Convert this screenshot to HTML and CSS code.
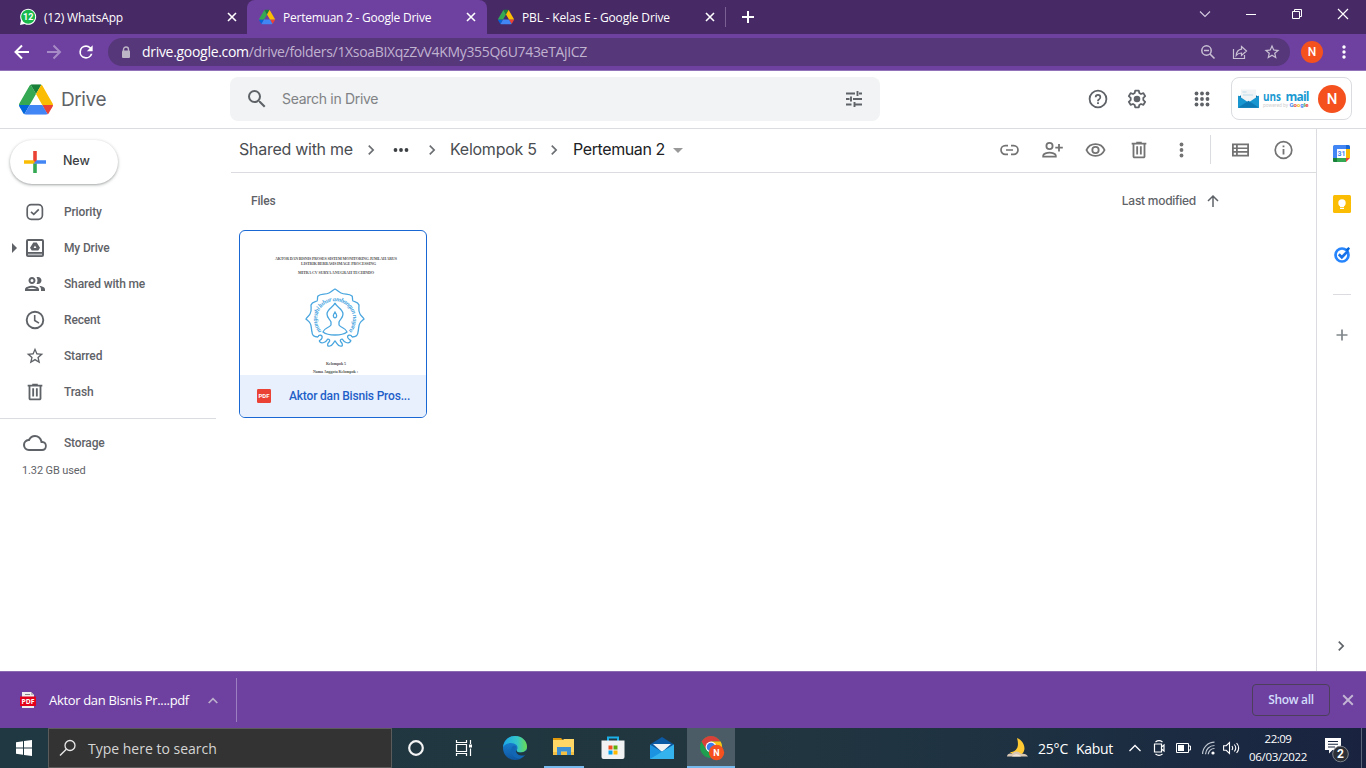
FILE: index.html
```html
<!DOCTYPE html>
<html lang="en">
<head>
<meta charset="utf-8">
<title>Pertemuan 2 - Google Drive</title>
<link rel="stylesheet" href="styles.css">
</head>
<body>
<svg class="defs" width="0" height="0">
  <symbol id="drive" viewBox="0 0 87.3 78">
    <path d="m6.6 66.85 3.85 6.65c.8 1.4 1.95 2.5 3.3 3.3l13.75-23.8h-27.5c0 1.55.4 3.1 1.2 4.5z" fill="#0066da"/>
    <path d="m43.65 25-13.75-23.8c-1.35.8-2.5 1.9-3.3 3.3l-25.4 44a9.06 9.06 0 0 0-1.2 4.5h27.5z" fill="#34a853"/>
    <path d="m73.55 76.8c1.35-.8 2.5-1.9 3.3-3.3l1.6-2.75 7.65-13.25c.8-1.4 1.2-2.95 1.2-4.5h-27.5l5.85 11.5z" fill="#ea4335"/>
    <path d="m43.65 25 13.75-23.8c-1.35-.8-2.9-1.2-4.5-1.2h-18.5c-1.6 0-3.15.45-4.5 1.2z" fill="#188038"/>
    <path d="m59.8 53h-32.3l-13.75 23.8c1.35.8 2.9 1.2 4.5 1.2h50.8c1.6 0 3.15-.45 4.5-1.2z" fill="#4285f4"/>
    <path d="m73.4 26.5-12.7-22c-.8-1.4-1.95-2.5-3.3-3.3l-13.75 23.8 16.15 28h27.45c0-1.55-.4-3.1-1.2-4.5z" fill="#fbbc04"/>
  </symbol>
  <symbol id="x" viewBox="0 0 10 10"><path d="M1 1l8 8M9 1l-8 8" fill="none" stroke="currentColor" stroke-width="1.6"/></symbol>
  <symbol id="trash" viewBox="0 0 24 24"><path d="M15 4V3H9v1H4v2h1v13c0 1.100.9 2 2 2h10c1.100 0 2-.9 2-2V6h1V4h-5zm2 15H7V6h10v13zM9 8h2v9H9zm4 0h2v9h-2z"/></symbol>
  <symbol id="star" viewBox="0 0 24 24"><path d="M22 9.240l-7.190-.62L12 2 9.190 8.630 2 9.240l5.460 4.730L5.820 21 12 17.270 18.180 21l-1.630-7.030L22 9.240zM12 15.400l-3.760 2.270 1-4.280-3.320-2.880 4.380-.38L12 6.100l1.710 4.040 4.380.38-3.320 2.880 1 4.280L12 15.400z"/></symbol>
  <symbol id="chev" viewBox="0 0 24 24"><path d="M8.600 16.600L13.200 12 8.600 7.400 10 6l6 6-6 6z"/></symbol>
</svg>

<header class="tabs">
  <div class="tab first">
    <svg class="fav" width="18" height="18" viewBox="0 0 18 18"><path d="M1 17l1-4.600A8 8 0 1 1 5.600 16z" fill="#fff"/><circle cx="9.200" cy="8.800" r="7" fill="#19b84b"/><text x="9.200" y="11.900" text-anchor="middle" class="badge12">12</text></svg>
    <span class="t ui tab-a">(12) WhatsApp</span>
    <svg class="close" width="10" height="10"><use href="#x"/></svg>
  </div>
  <div class="tab active">
    <svg class="fav" width="16" height="16"><use href="#drive"/></svg>
    <span class="t ui tab-b">Pertemuan 2 - Google Drive</span>
    <svg class="close" width="10" height="10"><use href="#x"/></svg>
  </div>
  <div class="tab third">
    <svg class="fav" width="16" height="16"><use href="#drive"/></svg>
    <span class="t ui tab-c">PBL - Kelas E - Google Drive</span>
    <svg class="close" width="10" height="10"><use href="#x"/></svg>
  </div>
  <i class="tabsep"></i>
  <svg class="newtab" width="12" height="12" viewBox="0 0 12 12"><path d="M6 0v12M0 6h12" stroke="#fff" stroke-width="2"/></svg>
  <div class="winctl">
    <svg width="46" height="28" viewBox="0 0 46 28"><path d="M18 11.500l5 5 5-5" fill="none" stroke="#d5cbe0" stroke-width="1.100"/></svg>
    <svg width="46" height="28" viewBox="0 0 46 28"><path d="M18 14.500h10" stroke="#fff"/></svg>
    <svg width="46" height="28" viewBox="0 0 46 28"><path d="M18.500 11.500h7v7h-7zM20.500 11V9.500h7v7H26" fill="none" stroke="#fff"/></svg>
    <svg width="46" height="28" viewBox="0 0 46 28"><path d="M18 9l10 10M28 9L18 19" stroke="#fff" stroke-width="1.200"/></svg>
  </div>
</header>

<div class="toolbar">
  <svg width="32" height="24" viewBox="0 0 32 24"><path d="M29 12H16M22 5.500L15.500 12l6.500 6.500" fill="none" stroke="#fff" stroke-width="2"/></svg>
  <svg class="fwd" width="32" height="24" viewBox="0 0 32 24"><path d="M15 12h13M21.500 5.500L28 12l-6.500 6.500" fill="none" stroke="#a78bc6" stroke-width="2"/></svg>
  <svg class="reload" width="20" height="20" viewBox="0 0 24 24"><path fill="#fff" d="M17.650 6.350A7.960 7.960 0 0 0 12 4a8 8 0 1 0 7.730 10h-2.080A6 6 0 1 1 12 6c1.660 0 3.140.69 4.220 1.780L13 11h7V4z"/></svg>
  <div class="omni">
    <svg class="lock" width="10" height="13" viewBox="0 0 10 13"><path d="M2.500 5V3.500a2.500 2.500 0 0 1 5 0V5" fill="none" stroke="#bdb6c6" stroke-width="1.400"/><rect x="1" y="4.500" width="8" height="7.500" rx="1" fill="#bdb6c6"/></svg>
    <span class="t ui url"><b>drive.google.com</b>/drive/folders/1XsoaBIXqzZvV4KMy355Q6U743eTAjICZ</span>
    <svg width="32" height="20" viewBox="0 0 32 20"><circle cx="14.500" cy="8.500" r="4.700" fill="none" stroke="#c9c0d4" stroke-width="1.500"/><path d="M12 8.500h5M18 12l4.500 4.500" stroke="#c9c0d4" stroke-width="1.600"/></svg>
    <svg width="32" height="20" viewBox="0 0 32 20"><path d="M9.500 7v9.500h11V13" fill="none" stroke="#c9c0d4" stroke-width="1.200"/><path d="M17.500 4.500l5 4.500-5 4.500V11c-2.500 0-4 .8-5.300 2.500.3-3.300 2-5.900 5.300-6.300z" fill="none" stroke="#c9c0d4" stroke-width="1.200"/></svg>
    <svg class="ostar" width="18" height="18"><use href="#star"/></svg>
  </div>
  <span class="ava small">N</span>
  <svg class="kebab" width="4" height="14" viewBox="0 0 4 14"><g fill="#fff"><circle cx="2" cy="2" r="1.700"/><circle cx="2" cy="7" r="1.700"/><circle cx="2" cy="12" r="1.700"/></g></svg>
</div>

<div class="gbar">
  <svg class="logo" width="34" height="31" viewBox="0 0 87.300 78"><use href="#drive"/></svg>
  <span class="t g drive-name">Drive</span>
  <div class="search">
    <svg width="24" height="24" viewBox="0 0 24 24"><path d="M15.500 14h-.79l-.28-.27A6.470 6.470 0 0 0 16 9.500 6.500 6.500 0 1 0 9.500 16c1.610 0 3.090-.59 4.230-1.570l.27.28v.79l5 4.990L20.490 19zm-6 0C7.010 14 5 11.990 5 9.500S7.010 5 9.500 5 14 7.010 14 9.500 11.990 14 9.500 14z"/></svg>
    <span class="t g ph">Search in Drive</span>
    <svg class="tune" width="20" height="20" viewBox="0 0 20 20"><path d="M2 4.500h9M15 4.500h3M2 10h3.500M9 10h9M2 15.500h5.500M11 15.500h7M13.500 2v5M7 7.500v5M10.500 13v5" fill="none" stroke="#5f6368" stroke-width="1.900"/></svg>
  </div>
  <div class="gright">
    <svg class="help" width="24" height="24" viewBox="0 0 24 24"><circle cx="12" cy="12" r="8.400" fill="none" stroke="#5f6368" stroke-width="1.800"/><path d="M11.100 15.300h1.800v1.700h-1.800zM12 7a3.200 3.200 0 0 0-3.200 3.200h1.700a1.500 1.500 0 1 1 3 0c0 1.600-2.400 1.500-2.400 4.100h1.800c0-1.800 2.300-2 2.300-4.100A3.200 3.200 0 0 0 12 7z"/></svg>
    <svg class="gear" width="24" height="24" viewBox="0 0 24 24"><path d="M10.200 3.600h3.600l.5 2.400 1.700 1 2.400-.9 1.800 3.100-1.900 1.700v2.200l1.900 1.700-1.800 3.100-2.400-.9-1.700 1-.5 2.400h-3.600l-.5-2.400-1.700-1-2.400.9-1.800-3.100 1.900-1.700v-2.200L3.800 9.200l1.800-3.100 2.400.9 1.700-1z" fill="none" stroke="#5f6368" stroke-width="1.800" stroke-linejoin="round"/><circle cx="12" cy="12" r="3.300"/></svg>
    <svg class="apps" width="16" height="16" viewBox="0 0 16 16"><g><circle cx="2.500" cy="2.500" r="1.900"/><circle cx="8" cy="2.500" r="1.900"/><circle cx="13.500" cy="2.500" r="1.900"/><circle cx="2.500" cy="8" r="1.900"/><circle cx="8" cy="8" r="1.900"/><circle cx="13.500" cy="8" r="1.900"/><circle cx="2.500" cy="13.500" r="1.900"/><circle cx="8" cy="13.500" r="1.900"/><circle cx="13.500" cy="13.500" r="1.900"/></g></svg>
    <div class="account">
      <svg width="74" height="24" viewBox="0 0 74 24">
        <path d="M0 10l10.500-6L21 10v10.500H0z" fill="#0a6fa8"/><path d="M3 2.500h15v12.500H3z" fill="#f1f3f5"/><path d="M4.500 5h4M5 8h10" stroke="#b4d6e6" stroke-width=".8"/><path d="M0 8.500l10.500 7 10.500-7v12.200H0z" fill="#1796cf"/><path d="M0 20.700l10.500-7 10.500 7z" fill="#0e7ab5"/>
        <text x="25" y="13.500" class="uns" textLength="18" lengthAdjust="spacingAndGlyphs">uns</text><text x="47.500" y="13.500" class="uns" textLength="24">mail</text><text x="25" y="20" class="pow" textLength="25">powered by</text>
        <text x="51.500" y="20" class="goog" textLength="19"><tspan fill="#4285f4">G</tspan><tspan fill="#ea4335">o</tspan><tspan fill="#fbbc04">o</tspan><tspan fill="#4285f4">g</tspan><tspan fill="#34a853">l</tspan><tspan fill="#ea4335">e</tspan></text>
      </svg>
      <span class="ava">N</span>
    </div>
  </div>
</div>

<main class="body">
  <nav class="side">
    <div class="new"><svg width="22" height="22" viewBox="0 0 22 22"><path d="M9.200 0h3.600v11H9.200z" fill="#ea4335"/><path d="M9.200 11h3.600v11H9.200z" fill="#34a853"/><path d="M0 9.200h9.200l3.600 3.600H0z" fill="#fbbc04"/><path d="M22 9.200h-9.200l-3.600 3.600H22z" fill="#4285f4"/></svg><span class="t g newt">New</span></div>
    <div class="item"><i class="arr"></i><svg width="24" height="24" viewBox="0 0 24 24"><rect x="4.200" y="4.700" width="15.200" height="14.600" rx="4" fill="none" stroke="#5f6368" stroke-width="1.700"/><path d="M8 11.800l2.800 2.600 5-5" fill="none" stroke="#5f6368" stroke-width="1.700"/></svg><span class="t">Priority</span></div>
    <div class="item"><i class="arr on"></i><svg width="24" height="24" viewBox="0 0 24 24"><path d="M19 3H5a2 2 0 0 0-2 2v14c0 1.100.9 2 2 2h14a2 2 0 0 0 2-2V5a2 2 0 0 0-2-2zM5 5h14v11H5z" fill-rule="evenodd"/><path d="M5 17.700h14v1.600H5z" fill="#b8babd"/><path d="M10.300 6.500h3.400l3.300 5.300-1.700 2.700H8.700L7 11.800zm1.700 3l-1.400 2.500h2.800z" fill-rule="evenodd"/></svg><span class="t">My Drive</span></div>
    <div class="item"><i class="arr"></i><svg width="24" height="24" viewBox="0 0 24 24"><path d="M9 12c1.930 0 3.500-1.570 3.500-3.500S10.930 5 9 5 5.500 6.570 5.500 8.500 7.070 12 9 12zm0-5a1.500 1.500 0 1 1 0 3 1.500 1.500 0 0 1 0-3zm0 6.750c-2.340 0-7 1.170-7 3.500V19h14v-1.750c0-2.330-4.660-3.500-7-3.500zM4.340 17c.84-.58 2.870-1.250 4.660-1.250s3.820.67 4.660 1.250zM16.040 13.810c1.160.84 1.960 1.960 1.960 3.440V19h4v-1.750c0-2.020-3.500-3.170-5.960-3.440zM15 12c1.930 0 3.500-1.570 3.500-3.500S16.930 5 15 5c-.54 0-1.040.13-1.500.35.63.89 1 1.980 1 3.150s-.37 2.260-1 3.150c.46.22.96.35 1.500.35z"/></svg><span class="t">Shared with me</span></div>
    <div class="item"><i class="arr"></i><svg width="24" height="24" viewBox="0 0 24 24"><circle cx="12" cy="12" r="8.300" fill="none" stroke="#5f6368" stroke-width="1.900"/><path d="M11.700 7v5.500l4.300 2.600" fill="none" stroke="#5f6368" stroke-width="1.600"/></svg><span class="t">Recent</span></div>
    <div class="item"><i class="arr"></i><svg width="20" height="20" class="s20"><use href="#star"/></svg><span class="t">Starred</span></div>
    <div class="item"><i class="arr"></i><svg width="22" height="22" class="s22"><use href="#trash"/></svg><span class="t">Trash</span></div>
    <hr class="line">
    <div class="item storage"><i class="arr"></i><svg width="24" height="24" viewBox="0 0 24 24"><path d="M19.350 10.040A7.490 7.490 0 0 0 12 4C9.110 4 6.600 5.640 5.350 8.040A5.990 5.990 0 0 0 0 14a6 6 0 0 0 6 6h13a5 5 0 0 0 .35-9.960zM19 18H6a4 4 0 0 1-.44-7.970l1.070-.11.5-.95A5.470 5.470 0 0 1 12 6c2.620 0 4.880 1.860 5.390 4.430l.3 1.500 1.530.11A2.980 2.980 0 0 1 22 15a3 3 0 0 1-3 3z"/></svg><span class="t">Storage</span></div>
    <div class="used"><span class="t usedt">1.32 GB used</span></div>
  </nav>

  <section class="content">
    <div class="crumbs">
      <span class="t g c1">Shared with me</span><svg class="cv v1" width="20" height="20"><use href="#chev"/></svg>
      <svg class="dots" width="16" height="4" viewBox="0 0 16 4"><g fill="#3c4043"><circle cx="2.500" cy="2" r="1.900"/><circle cx="8" cy="2" r="1.900"/><circle cx="13.500" cy="2" r="1.900"/></g></svg>
      <svg class="cv v2" width="20" height="20"><use href="#chev"/></svg><span class="t g c2">Kelompok 5</span><svg class="cv v3" width="20" height="20"><use href="#chev"/></svg><span class="t g c3">Pertemuan 2</span><i class="caret"></i>
      <div class="acts">
        <svg width="43" height="22" viewBox="0 0 43 22"><path d="M20 6.700h-2.700a4.300 4.300 0 0 0 0 8.600H20M23 6.700h2.700a4.300 4.300 0 0 1 0 8.600H23M18 11h7" fill="none" stroke="#737373" stroke-width="1.700"/></svg>
        <svg width="43" height="22" viewBox="0 0 43 22"><circle cx="18.500" cy="7" r="3.100" fill="none" stroke="#737373" stroke-width="1.800"/><path d="M12.200 17.700v-1.200c0-1.900 4-2.900 6.300-2.900s6.300 1 6.300 2.900v1.200zM28 5v7.500M24.300 8.700h7.500" fill="none" stroke="#737373" stroke-width="1.800"/></svg>
        <svg width="43" height="22" viewBox="0 0 43 22"><path d="M12.500 11c1.500-3.500 5-5.900 9-5.900s7.500 2.400 9 5.900c-1.500 3.500-5 5.900-9 5.900s-7.500-2.400-9-5.900z" fill="none" stroke="#737373" stroke-width="1.900"/><circle cx="21.500" cy="11" r="3.200" fill="none" stroke="#737373" stroke-width="1.800"/></svg>
        <svg class="tr" width="22" height="22"><use href="#trash"/></svg>
        <svg width="43" height="22" viewBox="0 0 43 22"><g><circle cx="21.500" cy="5.500" r="1.900"/><circle cx="21.500" cy="11" r="1.900"/><circle cx="21.500" cy="16.500" r="1.900"/></g></svg>
        <i class="vsep"></i>
        <svg width="43" height="22" viewBox="0 0 43 22"><path fill-rule="evenodd" d="M13 4.500h17v13H13zM14.800 6.300v2.100h2.200V6.300zm4 0v2.100h9.400V6.300zm-4 3.700v2h2.200v-2zm4 0v2h9.400v-2zm-4 3.700v2.100h2.200v-2.100zm4 0v2.100h9.400v-2.100z"/></svg>
        <svg width="43" height="22" viewBox="0 0 43 22"><circle cx="21.500" cy="11" r="8.300" fill="none" stroke="#737373" stroke-width="1.700"/><path d="M21.500 10v5.500M21.500 6.500v1.800" stroke="#737373" stroke-width="1.800"/></svg>
      </div>
    </div>
    <div class="listhead"><span class="t files">Files</span><span class="t g lm">Last modified</span><svg width="14" height="14" viewBox="0 0 14 14"><path d="M7 13V2M2 7l5-5 5 5" fill="none" stroke="#5f6368" stroke-width="1.500"/></svg></div>
    <article class="card">
      <svg class="thumb" width="186" height="144" viewBox="240 231 186 144">
        <g class="doc"><text x="275" y="260" textLength="122">AKTOR DAN BISNIS PROSES SISTEM MONITORING JUMLAH ARUS</text><text x="301" y="265" textLength="75">LISTRIK BERBASIS IMAGE PROCESSING</text><text x="298" y="274" textLength="76">MITRA CV SURYA ANUGRAH TECHINDO</text><text x="326" y="364.600" textLength="20">Kelompok 5</text><text x="313" y="373.400" textLength="45">Nama Anggota Kelompok :</text></g>
        <g fill="none" stroke="#4aa6df" stroke-width="1.300">
          <path d="M318 337c-4 0-6-2-6-5-1-3 0-6-2-9-1-2-3-3-4-4 1-2 3-3 4-5 2-3 1-6 1-9 1-3 4-3 6-4 1-1 0-4 1-5 3-3 7-1 11-3 2-1 4-3 6-4 2 1 4 3 6 4 4 2 8 0 11 3 1 1 0 4 1 5 2 1 5 1 6 4 0 3-1 6 1 9 1 2 3 3 4 5-1 1-3 2-4 4-2 3-1 6-2 9 0 3-2 5-6 5"/>
          <path d="M318 337c1-3 5-2 4 1s-4 2-2 4 6 0 7-2 4 0 2 2-2 5 1 4 3-3 5-5c2 2 2 4 5 5s3-2 1-4 1-4 2-2 5 4 7 2 0-1-2-4 3-4 4-1"/>
          <path d="M335 303c-1 4-8 6-8 11 0 4 3 5 4 8v3c-2 3-7 3-8 7 5 4 19 4 24 0-1-4-6-4-8-7v-3c1-3 4-4 4-8 0-5-7-7-8-11z"/>
          <path d="M335 312c-2 3-2.500 5 0 6 2.500-1 2-3 0-6z"/>
        </g>
        <path id="arc" d="M321.500 331A18 18 0 1 1 348.500 331" fill="none"/><text class="motto"><textPath href="#arc" textLength="82">mangesthi luhur ambangun nagara</textPath></text>
      </svg>
      <div class="cap"><svg width="14" height="14" viewBox="0 0 14 14"><rect width="14" height="14" rx="1.200" fill="#ea4335"/><text x="1.500" y="9.200" class="pdf" textLength="11" lengthAdjust="spacingAndGlyphs">PDF</text></svg><span class="t capt">Aktor dan Bisnis Pros...</span></div>
    </article>
  </section>

  <aside class="panel">
    <svg class="p1" width="17" height="17" viewBox="0 0 17 17"><path d="M1.500 0h12v4h-9v9H0V1.500A1.500 1.500 0 0 1 1.500 0z" fill="#4285f4"/><path d="M13 0h2.500A1.500 1.500 0 0 1 17 1.500V4h-4z" fill="#1967d2"/><path d="M13 4h4v9h-4z" fill="#fbbc04"/><path d="M0 13h13v4H1.500A1.500 1.500 0 0 1 0 15.500z" fill="#34a853"/><path d="M0 13h4v4H1.500A1.500 1.500 0 0 1 0 15.500z" fill="#188038"/><path d="M13 13h4l-4 4z" fill="#ea4335"/><path d="M4 4h9v9H4z" fill="#fff"/><text x="8.500" y="11.300" text-anchor="middle" class="cal">31</text></svg>
    <svg class="p2" width="18" height="18" viewBox="0 0 18 18"><rect width="18" height="18" rx="1.500" fill="#fbbc04"/><circle cx="9" cy="8" r="3.700" fill="#fff"/><path d="M7 10h4v2H7zM7 12.700h4V14H7z" fill="#fff"/></svg>
    <svg class="p3" width="18" height="18" viewBox="0 0 18 18"><circle cx="9" cy="9" r="6.500" fill="none" stroke="#2684fc" stroke-width="2.700"/><path d="M12.500 3.500l3-2.500 1.500 1.500-2 3z" fill="#0066da"/><path d="M5.800 8.300L8.800 11.300l6-6.200" fill="none" stroke="#1a73e8" stroke-width="2.700"/></svg>
    <hr class="pl">
    <svg class="p4" width="12" height="12" viewBox="0 0 12 12"><path d="M6 .5v11M.5 6h11" stroke="#80868b" stroke-width="1.700"/></svg>
    <svg class="p5" width="20" height="20"><use href="#chev"/></svg>
  </aside>
</main>

<footer class="dl">
  <svg class="pdfi" width="16" height="16" viewBox="0 0 16 16"><path d="M2 0h9l3 3v13H2z" fill="#eee"/><path d="M5 2.500h5" stroke="#888"/><path d="M11 0v3h3" fill="#bbb"/><rect y="4.500" width="16" height="9.500" fill="#e2001a"/><text x="1.500" y="11.800" class="pdf2" textLength="13" lengthAdjust="spacingAndGlyphs">PDF</text></svg>
  <span class="t ui dlt">Aktor dan Bisnis Pr....pdf</span>
  <svg class="up" width="10" height="7" viewBox="0 0 10 7"><path d="M.7 6L5 1.700 9.300 6" fill="none" stroke="#bdb0cc" stroke-width="1.700"/></svg>
  <i class="dsep"></i>
  <span class="showall"><span class="t ui sa">Show all</span></span>
  <svg class="dx" width="12" height="12"><use href="#x"/></svg>
</footer>

<div class="taskbar">
  <svg class="win" width="16" height="16" viewBox="0 0 16 16"><path d="M0 2.300L7 1.300V7.500H0zM8 1.100L16 0v7.500H8zM0 8.500h7v6.200L0 13.700zM8 8.500h8V16l-8-1.100z" fill="#fff"/></svg>
  <div class="tsearch"><svg width="18" height="18" viewBox="0 0 18 18"><circle cx="11" cy="6.500" r="5" fill="none" stroke="#e8e8e8" stroke-width="1.300"/><path d="M7.300 10.200L1 16.500" stroke="#e8e8e8" stroke-width="1.400"/></svg><span class="t ui ts">Type here to search</span></div>
  <div class="task"><svg width="20" height="20" viewBox="0 0 20 20"><circle cx="10" cy="10" r="6.800" fill="none" stroke="#f4f4f4" stroke-width="2.200"/></svg></div>
  <div class="task"><svg width="18" height="18" viewBox="0 0 18 18"><path d="M1.500 1v2.500h10V1M1.500 17v-2.500h10V17M1.500 5.500h10v7h-10zM15.500 1v4M15.500 9.500V17" fill="none" stroke="#fff" stroke-width="1.200"/><path d="M14 5.500h3v3h-3z" fill="#fff"/></svg></div>
  <div class="task edge"><svg width="24" height="24" viewBox="0 0 24 24"><defs><linearGradient id="e1"><stop stop-color="#1ba6e8"/><stop offset=".6" stop-color="#35c7c7"/><stop offset="1" stop-color="#6bdc4f"/></linearGradient><linearGradient id="e2" x2="0" y2="1"><stop stop-color="#1b8de0"/><stop offset="1" stop-color="#0f559f"/></linearGradient></defs><circle cx="12" cy="12" r="12" fill="url(#e2)"/><path d="M0 11C1 4 6 0 12 0c7 0 12 5 12 10.500 0 4-3 6-6.500 6-3 0-4.500-1.300-3.500-3 .8-1.300.7-3-.5-4.500C10 5.500 3 6.500 0 11z" fill="url(#e1)"/><path d="M9 11c-2 4 0 11 7 11.500 3-.3 5-2 6.500-4.500-4 2-9 1-10-3-.4-1.500.5-3 .5-4.500-1.500-1.300-3-.8-4 .5z" fill="#1266b4"/><path d="M14 13.500c-1 1.700.5 3 3.500 3 2.500 0 5-.8 6-3l.5 3-1.700 2.500c-4 1.500-8.800 0-9.300-4z" fill="#203641"/></svg></div>
  <div class="task open"><svg width="22" height="20" viewBox="0 0 22 20"><path d="M0 1h8l2 2H0z" fill="#e09a0c"/><path d="M0 3h10l1-1h10v16H0z" fill="#ffd766"/><path d="M0 15h21v3H0z" fill="#f3c043"/><path d="M4 18v-8h14v8h-4v-3.500H8V18z" fill="#3b8fd4"/></svg></div>
  <div class="task wide"><svg width="24" height="24" viewBox="0 0 24 24"><path d="M7 6V1.500h10V6" fill="none" stroke="#1bb0e8" stroke-width="2"/><path d="M.5 4.500h23V21a2 2 0 0 1-2 2h-19a2 2 0 0 1-2-2z" fill="#f1f2f3"/><path d="M7.500 9.500h4v4h-4z" fill="#f25022"/><path d="M12.500 9.500h4v4h-4z" fill="#5fae0c"/><path d="M7.500 14.500h4v4h-4z" fill="#00a4ef"/><path d="M12.500 14.500h4v4h-4z" fill="#ffb900"/></svg></div>
  <div class="task wide"><svg width="24" height="24" viewBox="0 0 24 24"><path d="M0 8.500L12 1l12 7.500L12 16z" fill="#0c59a4"/><path d="M3 8h18l-9 8z" fill="#f0f3f6"/><path d="M0 8.500l12 7.300 12-7.300V23H0z" fill="#1b93e0"/><path d="M0 23l12-7.200L24 8.500V23z" fill="#35b3ee"/></svg></div>
  <div class="task cur"><svg width="28" height="26" viewBox="0 0 28 26"><circle cx="12" cy="12" r="11" fill="#1e9e4e"/><path d="M2.500 6.500A11 11 0 0 1 21.500 6.500H12L7.200 14.700z" fill="#d8403a"/><path d="M12 6.500h9.600A11 11 0 0 1 12 23l4.800-8.300z" fill="#fbc116"/><circle cx="12" cy="12" r="5.400" fill="#fff"/><circle cx="12" cy="12" r="4.300" fill="#3b7ded"/><circle cx="17.500" cy="17.500" r="7.700" fill="#f4511e"/><text x="17.500" y="21" text-anchor="middle" class="cn">N</text></svg></div>
  <div class="tray">
    <svg class="moon" width="24" height="20" viewBox="0 0 24 20"><path d="M11 0c7 3 10 11 5 16-4 3-9 1.500-12-2 7 0 9.500-6 7-14z" fill="#ffc933"/><path d="M1 18.500c0-2.500 3-3.500 5-2.500 2-3.500 7-3.500 9 0 3-1 6 .5 7 2.500z" fill="#d9c7b4"/><path d="M6 18.500c2-3 7-3 9 0z" fill="#f3e6d6"/></svg>
    <span class="t ui deg">25°C</span><span class="t ui kab">Kabut</span>
    <svg class="tup" width="12" height="8" viewBox="0 0 12 8"><path d="M.5 7L6 1.500 11.500 7" fill="none" stroke="#fff" stroke-width="1.300"/></svg>
    <svg class="meet" width="12" height="16" viewBox="0 0 12 16"><path d="M1.500 4h7v8h-7zM8.500 7l2.500-2v6L8.500 9M2.500 2c2-1.500 5-1.500 7 0M2.500 14c2 1.500 5 1.500 7 0" fill="none" stroke="#fff" stroke-width="1.200"/></svg>
    <svg class="bat" width="15" height="10" viewBox="0 0 15 10"><path d="M.5.500h12v9H.5zM12.500 3h2v4h-2" fill="none" stroke="#fff"/><path d="M2 2h6v6H2z" fill="#fff"/></svg>
    <svg class="wifi" width="13" height="14" viewBox="0 0 13 14"><g fill="none" stroke="#c0c8d1" stroke-width="1.200"><path d="M.6 13A12 12 0 0 1 12.500 1.200"/><path d="M3.500 13.200A9 9 0 0 1 12.500 4.500"/><path d="M6.300 13.200a6 6 0 0 1 6.200-5.700"/></g><circle cx="11" cy="12" r="1.600" fill="#fff"/></svg>
    <svg class="vol" width="17" height="14" viewBox="0 0 17 14"><path d="M.6 4.700h2.600L6.500 1.500v11L3.200 9.300H.6zM9 5c.8 1.200.8 2.800 0 4M11.300 3.500c1.700 2 1.700 5 0 7M13.600 2c2.500 3 2.500 7 0 10" fill="none" stroke="#fff" stroke-width="1.100"/></svg>
    <div class="clock"><span class="t ui ck">22:09</span><span class="t ui cd">06/03/2022</span></div>
    <svg class="note" width="26" height="26" viewBox="0 0 26 26"><path d="M1 1h16v12H8.500L5 16.500V13H1z" fill="#fff"/><path d="M4 4.500h10M4 7.200h10M4 10h7" stroke="#1a2740" stroke-width="1.100"/><circle cx="16.500" cy="17" r="7.800" fill="#2c3036" stroke="#7d828a"/><text x="16.500" y="21.300" text-anchor="middle" class="nb">2</text></svg>
    <i class="peek"></i>
  </div>
</div>
</body>
</html>
```
FILE: styles.css
```css
* { box-sizing: border-box; }
body { margin: 0; width: 1366px; height: 768px; overflow: hidden; display: flex; flex-direction: column; background: #fff; font-family: Roboto, "Liberation Sans", sans-serif; font-size: 12px; color: #5f6368; }
.defs { position: absolute; }
svg { flex: none; fill: #5f6368; display: block; }
i { display: block; flex: none; }
.t { white-space: nowrap; flex: none; }
.ui { font-family: "Open Sans", "Noto Sans", sans-serif; }
.g { font-family: Inter, "Liberation Sans", sans-serif; }

.tabs { height: 34px; background: #472965; display: flex; align-items: center; color: #fff; font-size: 12px; flex: none; }
.tab { height: 34px; width: 240px; display: flex; align-items: center; padding-left: 12px; flex: none; }
.tab .t { margin-left: 8px; }
.tab.first { width: 247px; padding-left: 19px; }
.tab.first .t { margin-left: 7px; }
.tab-a { letter-spacing: -.18px; }
.tab-b { letter-spacing: -.24px; }
.tab-c { letter-spacing: -.17px; }
.tab.active { background: #6e41a0; border-radius: 8px 8px 0 0; }
.tab.third { width: 239px; padding-left: 11px; }
.close { margin: 0 11px 0 auto; color: #fff; }
.first .close { margin-right: 10px; }
.tabsep { width: 1px; height: 20px; background: #7a6093; margin-left: -1px; }
.newtab { margin-left: 16px; }
.winctl { display: flex; margin: -6px 0 0 auto; }

.toolbar { height: 37px; background: #6e41a0; border-bottom: 1px solid #9272b8; display: flex; align-items: center; flex: none; }
.reload { margin-left: 12px; }
.omni { margin-left: 12px; width: 1182px; height: 28px; border-radius: 14px; background: #56377a; display: flex; align-items: center; padding-left: 13px; color: #c0b3d0; font-size: 14px; flex: none; }
.url { margin: -1px auto 0 11px; letter-spacing: -.33px; }
.url b { font-weight: 400; color: #fff; letter-spacing: -.3px; }
.ostar { fill: #c9c0d4; margin: 0 9px 0 7px; }
.ava { width: 28px; height: 28px; border-radius: 50%; background: #f4511e; color: #fff; font-size: 15px; font-weight: 500; display: flex; align-items: center; justify-content: center; flex: none; }
.ava.small { width: 22px; height: 22px; font-size: 12px; margin: 0 19px 0 11px; }

.gbar { height: 58px; border-bottom: 1px solid #dadce0; display: flex; align-items: center; flex: none; padding-bottom: 1px; }
.logo { margin-left: 19px; }
.drive-name { font-size: 19px; width: 177px; padding-left: 8px; letter-spacing: -.4px; }
.search { width: 650px; height: 44px; border-radius: 8px; background: #f1f3f4; display: flex; align-items: center; padding: 0 16px 0 15px; flex: none; }
.ph { font-size: 14px; margin: -2px 0 0 13px; color: #808285; letter-spacing: -.3px; }
.tune { margin-left: auto; }
.gright { display: flex; align-items: center; margin: 0 14px 0 auto; }
.gear { margin-left: 15px; }
.apps { margin: 0 21px 0 45px; }
.account { width: 121px; height: 43px; border: 1px solid #dadce0; border-radius: 8px; display: flex; align-items: center; justify-content: space-between; padding: 0 5px 0 6px; margin-top: -1px; }
.account .ava { margin-top: 1px; }
.badge12 { font: bold 9px Roboto, sans-serif; fill: #fff; }
.uns { font: bold 12px "Open Sans", sans-serif; fill: #1b9ad2; }
.pow { font: 5px Roboto, sans-serif; fill: #d0d0d0; }
.goog { font: bold 6px Roboto, sans-serif; }

.body { display: flex; height: 542px; flex: none; }
.side { width: 231px; flex: none; }
.new { margin: 11px 0 10px 10px; width: 108px; height: 44px; border-radius: 22px; box-shadow: 0 1px 2px rgba(60,64,67,.3), 0 1px 3px 1px rgba(60,64,67,.15); display: flex; align-items: center; padding-left: 14px; color: #3c4043; }
.newt { margin: -4px 0 0 17px; font-size: 12.500px; font-weight: 500; letter-spacing: -.1px; }
.item { height: 36px; display: flex; align-items: center; padding-left: 12px; font-weight: 500; letter-spacing: -.15px; }
.item .t { margin-left: 17px; }
.arr { width: 5px; height: 10px; margin-right: 6px; }
.arr.on { border: 5px solid transparent; border-left-color: #5f6368; border-right: 0; }
.s20 { margin: 0 2px; }
.s22 { margin: 0 1px; }
.line { width: 216px; margin: 8px 0 0; border: 0; border-top: 1px solid #dadce0; }
.storage { margin-top: 6px; }
.used { padding: 3px 0 0 22px; font-size: 11px; letter-spacing: -.12px; }

.content { width: 1085px; flex: none; }
.crumbs { height: 44px; border-bottom: 1px solid #dadce0; display: flex; align-items: center; padding: 0 11px 2px 8px; font-size: 16px; color: #4a4d51; }
.crumbs .t { margin-top: -1px; }
.c1 { width: 115px; letter-spacing: -.27px; }
.c2 { width: 87px; letter-spacing: -.26px; }
.c3 { width: 92px; color: #202124; letter-spacing: -.4px; }
.cv { fill: #6b6e72; }
.v1 { margin: 0 12px 0 7px; }
.v2 { margin: 0 8px 0 13px; }
.v3 { margin: 0 9px 0 7px; }
.caret { border: 5px solid transparent; border-top-color: #999; border-bottom: 0; margin: 1px 0 0 8px; }
.acts { display: flex; align-items: center; margin-left: auto; }
.acts svg { fill: #737373; }
.acts .tr { margin: 0 10px 0 11px; }
.vsep { width: 1px; height: 29px; background: #dadce0; margin: 0 8px 0 7px; }
.listhead { display: flex; align-items: center; height: 57px; padding: 0 96px 2px 20px; font-weight: 500; }
.files { letter-spacing: -.15px; }
.lm { margin: 0 10px 0 auto; letter-spacing: -.28px; }
.card { margin-left: 8px; width: 188px; height: 188px; border: 1px solid #1967d2; border-radius: 6px; overflow: hidden; }
.doc { font: bold 4px "Liberation Serif", serif; fill: #555; }
.motto { font: italic bold 6.500px "Liberation Serif", serif; fill: #4aa6df; }
.cap { height: 42px; background: #e8f0fe; color: #1f5fc8; display: flex; align-items: center; padding-left: 17px; font-weight: 500; }
.capt { margin-left: 18px; letter-spacing: -.18px; }
.pdf { font: bold 5.500px Roboto, sans-serif; fill: #fff; }
.panel { width: 50px; border-left: 1px solid #dadce0; display: flex; flex-direction: column; align-items: center; }
.p1 { margin: 16px 0 33px; }
.p2 { margin-bottom: 33px; }
.p3 { margin-bottom: 30px; }
.pl { width: 18px; margin: 0 0 34px; border: 0; border-top: 1px solid #dadce0; }
.p5 { margin: 295px 1px 0 0; }
.cal { font: bold 7px Roboto, sans-serif; fill: #4285f4; }

.dl { height: 57px; border-top: 1px solid #8c6ab2; background: #6e41a0; display: flex; align-items: center; flex: none; color: #fff; font-size: 13px; padding: 0 12px 0 20px; }
.dlt { margin-left: 13px; width: 140px; letter-spacing: -.33px; }
.up { margin: 0 18px 0 19px; }
.dsep { width: 1px; height: 44px; background: #9c7fc0; }
.pdf2 { font: bold 7.500px "Open Sans", sans-serif; fill: #fff; }
.showall { margin: -1px 0 0 auto; width: 78px; height: 32px; border: 1px solid #4b3f5c; border-radius: 4px; display: flex; align-items: center; justify-content: center; font-size: 12px; font-weight: 600; color: #d2dcfb; letter-spacing: -.3px; padding-bottom: 1px; }
.dx { color: #c3b5d3; margin-left: 12px; }

.taskbar { height: 40px; flex: none; display: flex; align-items: center; background: linear-gradient(90deg, #203842 0%, #21363f 55%, #1d3142 75%, #192340 100%); color: #fff; }
.win { margin: 0 16px; }
.tsearch { width: 344px; height: 40px; background: #333; border: 1px solid #5b5b5b; display: flex; align-items: center; padding-left: 10px; font-size: 14px; color: #d5d5d5; }
.ts { margin-left: 11px; }
.task { width: 48px; height: 40px; display: flex; align-items: center; justify-content: center; flex: none; }
.task.edge { margin-left: 3px; }
.task.open { border-bottom: 2px solid #76b9ed; width: 40px; margin: 0 4px 0 5px; }
.task.wide { width: 49px; }
.cur { background: #4b5c66; border-bottom: 2px solid #76b9ed; padding: 2px 0 0 3px; margin-left: 1px; }
.cn { font: bold 9px Roboto, sans-serif; fill: #fff; }
.tray { display: flex; align-items: center; margin-left: auto; font-size: 14px; height: 40px; }
.moon { margin-left: -1px; }
.deg { margin-left: 8px; width: 30px; letter-spacing: -.2px; }
.kab { margin: 0 16px 0 8px; width: 37px; letter-spacing: -.3px; }
.tup { margin-right: 12px; }
.meet { margin-right: 11px; }
.bat { margin-right: 11px; }
.wifi { margin-right: 8px; }
.clock { width: 60px; margin: 0 16px 0 8px; display: flex; flex-direction: column; align-items: center; font-size: 11.500px; line-height: 18px; }
.ck { letter-spacing: -.5px; }
.cd { letter-spacing: -.32px; }
.nb { font: bold 12px Roboto, sans-serif; fill: #fff; }
.note { margin-top: 4px; }
.peek { width: 1px; height: 40px; background: #5b6478; margin: 0 4px 0 11px; }
```
